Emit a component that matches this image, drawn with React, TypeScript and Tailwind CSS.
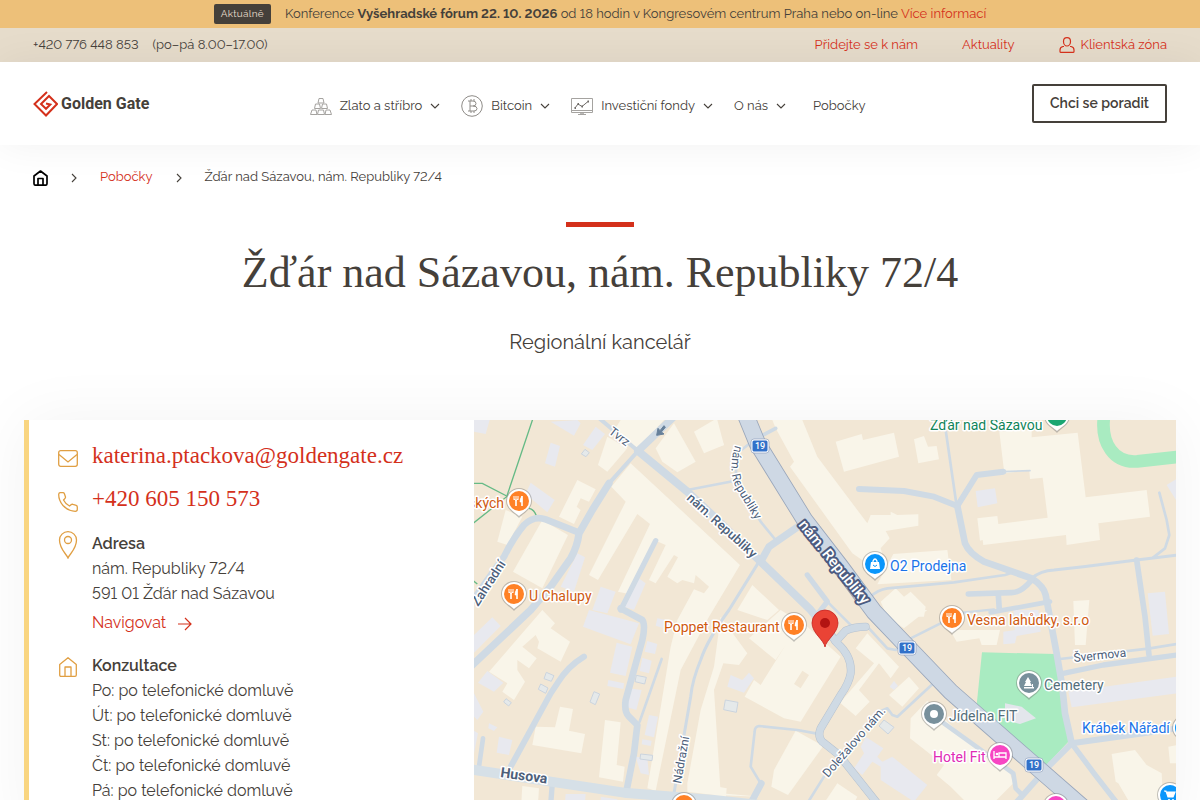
import { ReactNode } from 'react';

interface PinProps {
    x       : number;
    y       : number;
    color   : string;
    children?: ReactNode;
}

interface MapLabelProps {
    x       : number;
    y       : number;
    color   : string;
    anchor? : 'start' | 'end';
    children: ReactNode;
}

interface StreetProps {
    x       : number;
    y       : number;
    angle   : number;
    size?   : number;
    weight? : number;
    children: ReactNode;
}

// building outlines, roads and paths are kept in thirds of a pixel
const buildings = [
    '440,0 570,0 525,50 492,85 415,40',
    '400,50 460,85 400,155 372,135',
    '545,85 600,10 665,125 610,157 565,125',
    '660,35 720,0 750,75 690,100',
    '310,180 365,208 345,245 320,235 308,260 320,270 300,312 255,290',
    '205,300 282,345 205,505 117,455',
    '95,270 145,290 100,375 70,365',
    '470,130 412,200 455,245 345,465 372,480 490,282 528,312 432,515 465,522 540,360 575,375 525,480 545,490 600,405 612,412 580,470 610,490 625,480 660,490 665,465 705,500 690,520 660,508 610,600 590,680 520,1105 545,1112 620,750 705,590 798,435 720,362',
    '720,740 680,870 640,1090 640,1115 720,1125 860,1130 740,1120 720,810 748,730 795,735 820,700 740,590',
    '825,655 920,570 1000,620 1100,710 980,905 930,895 812,830 840,780 860,795 935,675 905,720',
    '965,932 1048,978 942,1125 892,1100 900,1050',
    '1145,685 1180,640 1275,740 1250,775 1215,730 1155,810 1187,845 1145,888 1098,848 1200,730',
    '1305,770 1335,805 1285,860 1245,825',
    '1205,570 1360,570 1290,625',
    '1310,895 1360,842 1440,925 1608,1060 1618,1090 1568,1140 1500,1170 1430,1100 1388,1065 1410,1035 1308,955',
    '1090,1090 1150,1130 1140,1150 1050,1150',
    '720,1098 758,1105 755,1140 720,1135',
    '905,25 895,0 985,0 1030,110 1180,310 1190,285 1250,285 1250,275 1270,285 1333,283 1333,317 1235,333 1247,355 1220,385 1230,420 1200,445 1135,400 948,140 960,125',
    '1085,65 1163,42 1167,60 1260,38 1275,110 1110,155',
    '1320,58 1350,48 1362,80 1388,78 1395,118 1333,130',
    '720,0 730,0 750,75 720,85',
    '1258,402 1420,390 1432,480 1210,493',
    '1220,545 1265,505 1290,530 1310,515 1355,560 1350,590 1240,590',
    '835,495 915,570 880,600 790,570',
    '1576,35 1673,30 1673,52 1811,38 1835,232 2018,210 2028,290 1873,310 1878,360 1778,375 1776,345 1528,375 1526,360 1518,362 1510,295 1570,288 1573,312 1721,293 1706,173 1668,177 1666,152 1591,160',
    '1798,543 1846,540 1835,675 1803,675',
    '1448,665 1428,630 1578,630 1568,675 1523,675 1516,655',
    '1913,1002 1983,990 2018,1035 2063,1060 2068,1150 1968,1150 1933,1090 1925,1085',
    '2083,980 2110,975 2110,1030 2088,1030',
    '205,570 243,610 230,625 288,665 260,725 190,685 195,665 185,645 145,680 188,715 165,745 130,720 130,750 153,785 120,840 85,815 100,790 45,755',
    '258,860 297,867 285,932 333,942 322,1000 175,975 185,920 243,922',
    '393,900 440,907 428,1035 452,1040 447,1085 375,1072',
    '145,1098 195,1105 190,1180 140,1180',
];

const annexes = [
    '0,0 47,0 35,42 0,35',
    '230,5 310,0 320,10 300,47',
    '365,20 393,42 355,90 327,75',
    '230,68 258,78 243,140 213,130',
    '170,188 242,240 220,277 155,222',
    '310,400 333,412 300,515 260,500',
    '380,500 425,515 400,580 355,570',
    '490,472 515,490 480,570 450,560',
    '55,592 80,618 0,698 0,645',
    '345,570 495,610 470,673 327,620',
    '428,668 475,680 455,768 408,758',
    '403,780 450,790 448,807 400,798',
    '520,663 550,672 543,702 512,695',
    '505,713 533,722 525,760 497,753',
    '465,805 503,810 487,870 460,862',
    '525,885 552,890 540,952 512,945',
    '550,595 575,600 570,625 545,617',
    '40,753 88,788 60,815 12,788',
    '75,950 115,960 105,1005 68,998',
    '0,820 28,875 10,900 0,890',
    '0,932 12,940 0,1000',
    '45,910 70,922 60,933 43,925',
    '275,1122 335,1122 330,1180 270,1180',
    '380,1130 430,1138 430,1180 380,1180',
    '505,958 533,962 530,978 503,973',
    '485,1010 520,1015 525,1065 500,1060',
    '770,765 805,780 825,758 840,775 810,818 760,800',
    '1175,950 1228,985 1210,1010 1225,1025 1255,1010 1360,1095 1320,1145 1220,1080 1220,1040 1195,1025 1165,1065 1140,1045 1170,1000 1160,980',
    '1260,783 1272,798 1260,810 1247,800',
    '1505,213 1563,205 1570,250 1511,262',
    '2078,195 2106,178 2106,240',
    '2021,520 2073,515 2085,642 2036,647',
    '1618,570 1693,570 1700,635 1628,648 1623,670 1588,673 1588,635 1623,630',
    '1783,815 2110,770 2110,820 1793,862',
];

const sheds = [
    '333,88 346,98 336,110 322,102',
    '217,757 240,767 232,784 210,776',
    '200,792 222,804 215,820 193,808',
    '96,836 112,848 104,858 89,846',
    '360,815 377,822 364,854 348,846',
    '487,766 517,772 512,792 483,785',
    '500,1002 536,1006 534,1022 498,1017',
    '754,840 792,847 787,877 749,869',
    '1230,900 1260,922 1242,942 1215,918',
];

const roads: [number, string][] = [
    [12, 'M370 -10 L492 93'],
    [24, 'M492 93 L640 215 L720 290 L860 425 L1010 570 L1080 655'],
    [22, 'M600 -10 L492 93'],
    [12, 'M492 93 L405 190'],
    [22, 'M405 190 L355 270 L315 340 Q310 380 290 415 L230 500 L170 570 L-10 740'],
    [20, 'M315 338 L215 298 Q180 285 150 315 Q120 350 90 410 L-10 550'],
    [8, 'M640 210 L780 183'],
    [16, 'M545 362 L440 570'],
    [20, 'M440 565 L505 600 Q515 615 505 660 L455 840 Q450 875 465 890 L490 915 L480 1000 L458 1110'],
    [8, 'M563 717 L497 905'],
    [18, 'M330 710 Q280 740 250 790 L230 820 L110 1040'],
    [14, 'M27 955 L15 1040'],
    [16, 'M235 1090 L228 1180'],
    [9, 'M855 425 L765 570 Q700 660 680 720 Q655 780 650 830 L600 1120'],
    [22, 'M975 318 L885 380 L860 425'],
    [8, 'M905 360 L860 305 L820 240 L785 170 L790 100 L840 60'],
    [11, 'M840 60 L905 25'],
    [16, 'M1000 465 L1060 545 L1025 590'],
    [8, 'M1060 545 L1135 620'],
    [18, 'M1155 207 L1290 213 L1380 230 L1450 258'],
    [18, 'M1450 258 L1508 165 L1588 155'],
    [5, 'M1588 155 L1668 152'],
    [8, 'M1415 30 L1448 258'],
    [20, 'M1450 258 L1473 370 Q1485 400 1530 425 L1673 475 Q1710 500 1715 525 L1748 700 L1765 800 L1773 880 L1793 970'],
    [16, 'M1793 970 L1860 1060 L1930 1150'],
    [18, 'M1793 970 L1718 1045 L1625 1150'],
    [18, 'M1793 970 L2008 940 L2110 925'],
    [9, 'M1673 475 Q1700 452 1740 450 L1828 440 L1988 420 L2110 405'],
    [17, 'M1988 420 L2013 590 L2025 705'],
    [8, 'M2038 412 L2073 385 L2086 345 L2078 300 L2056 218'],
    [17, 'M1673 480 Q1640 520 1610 518 L1483 522'],
    [17, 'M1573 525 L1576 570'],
    [14, 'M1550 577 L1728 545'],
    [8, 'M1190 530 Q1210 510 1240 505 L1440 487 L1593 465 L1613 458'],
    [16, 'M1768 760 L1888 735 L2110 705'],
    [8, 'M1758 717 L2028 685 L2110 672'],
    [7, 'M1428 582 L1560 568'],
    [8, 'M1185 625 L1240 685 L1265 690 L1310 655 L1440 590'],
    [8, 'M1025 940 L970 930 L855 918 Q842 920 842 935 L830 1040 L860 1090'],
    [20, 'M862 1090 L830 1150'],
    [8, 'M1375 793 L1270 890 L1255 885 L1240 865 L1205 880'],
    [8, 'M1050 1070 L1000 1150'],
    [14, 'M1410 910 L1618 1060 L1625 1105 L1645 1125'],
];

const edgedRoads: [number, string][] = [
    [21, 'M1035 600 L1090 670 Q1135 710 1130 760 Q1125 790 1100 825 L1040 925 Q1030 950 1045 965 L1095 1005 L1210 1150'],
    [21, 'M1085 665 L1115 632 Q1140 620 1175 620'],
];

function Pin({ x, y, color, children }: PinProps) {
    return (
        <g transform={`translate(${x} ${y})`}>
            <path d="M0 17 C-3 13 -13 9 -13 0 A13 13 0 0 1 13 0 C13 9 3 13 0 17Z" fill="#6b6b6b" opacity="0.4" />
            <path d="M0 15 C-3 12 -12 8 -12 0 A12 12 0 0 1 12 0 C12 8 3 12 0 15Z" fill="#fff" />
            <circle r="10" fill={color} />
            {children}
        </g>
    );
}

function Fork() {
    return (
        <g fill="none" stroke="#fff">
            <path d="M-5 -5V-1M-3 -5V-1M-1 -5V-1M-5 -2Q-3 1 -1 -2" strokeWidth="1" />
            <path d="M-3 -1V5M3 -5V5" strokeWidth="1.6" />
            <path d="M3 -5Q1 -3 1 1H3Z" fill="#fff" strokeWidth="0.6" />
        </g>
    );
}

function MapLabel({ x, y, color, anchor = 'start', children }: MapLabelProps) {
    return (
        <text x={x} y={y} fill={color} textAnchor={anchor} fontSize="14" stroke="#fff" strokeWidth="3" strokeLinejoin="round" paintOrder="stroke">
            {children}
        </text>
    );
}

function Street({ x, y, angle, size = 12, weight = 400, children }: StreetProps) {
    return (
        <text
            transform={`translate(${x} ${y}) rotate(${angle})`}
            fontSize={size}
            fontWeight={weight}
            fill="#4d607a"
            stroke="#fff"
            strokeWidth="3"
            strokeLinejoin="round"
            paintOrder="stroke"
        >
            {children}
        </text>
    );
}

function RoadSign({ x, y }: { x: number; y: number }) {
    return (
        <g transform={`translate(${x} ${y})`}>
            <rect x="-9" y="-7" width="18" height="14" rx="3" fill="#fff" stroke="#8496b5" strokeWidth="0.6" />
            <rect x="-7.5" y="-5.5" width="15" height="11" rx="1.5" fill="#3271c9" />
            <text y="3" fontSize="9" fontWeight="500" fill="#fff" textAnchor="middle">19</text>
        </g>
    );
}

function BranchMap() {
    return (
        <svg
            className="absolute inset-0 h-full w-full font-[Roboto,sans-serif]"
            viewBox="0 0 702 420"
            preserveAspectRatio="xMidYMin slice"
            role="img"
            aria-label="Mapa pobočky"
        >
            <rect width="702" height="420" fill="#f2e7d5" />
            <g transform="scale(0.33333)">
                {buildings.map((points) => <polygon key={points} points={points} fill="#f9f5e9" />)}
                <polygon points="985,752 1005,765 980,805 960,792" fill="#f2e7d5" />
                {annexes.map((points) => <polygon key={points} points={points} fill="#e8e9ef" />)}
                {sheds.map((points) => <polygon key={points} points={points} fill="#e5e9ea" stroke="#cbd4de" strokeWidth="3" />)}
                <polygon points="1524,697 1743,702 1783,965 1718,1035 1608,955 1508,855" fill="#a9ebc1" />
                <polygon points="1593,850 1643,860 1686,895 1638,912 1593,900" fill="#e3e6ec" />
                <path d="M1890 -10 C1880 70 1920 130 1990 124 L2110 111" fill="none" stroke="#a9ebc1" strokeWidth="38" />

                <g fill="none" stroke="#65ba86" strokeWidth="4">
                    <path d="M177 -5 L98 230 L-5 312" />
                    <path d="M-5 190 H25 L98 228" />
                    <path d="M165 265 Q180 268 187 287" />
                    <path d="M-5 480 L10 492" />
                </g>

                <g fill="none" stroke="#cfdae4" strokeLinecap="round" strokeLinejoin="round">
                    {roads.map(([width, d]) => <path key={d} d={d} strokeWidth={width} />)}
                </g>
                <g fill="none" strokeLinecap="round" strokeLinejoin="round">
                    {edgedRoads.map(([width, d]) => <path key={d} d={d} stroke="#b6c2d0" strokeWidth={width + 3} />)}
                    {edgedRoads.map(([width, d]) => <path key={d} d={d} stroke="#cfdae4" strokeWidth={width} />)}
                    <path d="M-10 1048 L230 1085 L450 1118 L720 1140 L900 1160" stroke="#d6e0e7" strokeWidth="30" />
                    <path d="M813 -20 L850 70 L992 300 L1100 440 L1200 575 L1310 690 L1430 815 L1681 1035 L1830 1165" stroke="#9aa7bb" strokeWidth="52" />
                    <path d="M813 -20 L850 70 L992 300 L1100 440 L1200 575 L1310 690 L1430 815 L1681 1035 L1830 1165" stroke="#ced8e4" strokeWidth="47" />
                </g>
                <path d="M548 46 L552 25 L558 32 L570 17 L574 22 L562 36 L570 42 Z" fill="#66809a" stroke="#66809a" strokeWidth="3" />
            </g>

            <Street x={134} y={13} angle={37}>Tvrz</Street>
            <Street x={212} y={79} angle={42} size={13} weight={500}>nám. Republiky</Street>
            <path id="side-street" d="M261 25 Q253 52 263 70 L285 106" fill="none" />
            <text fontSize="12" fill="#4d607a" stroke="#fff" strokeWidth="3" strokeLinejoin="round" paintOrder="stroke">
                <textPath href="#side-street">nám. Republiky</textPath>
            </text>
            <text
                transform="translate(324 105) rotate(51)"
                fontSize="15"
                fontWeight="500"
                fill="#fff"
                stroke="#4c5b80"
                strokeWidth="4"
                strokeLinejoin="round"
                paintOrder="stroke"
            >
                nám. Republiky
            </text>
            <Street x={4} y={187} angle={-57} size={13} weight={500}>Zahradní</Street>
            <Street x={26} y={357} angle={8} size={14} weight={700}>Husova</Street>
            <Street x={207} y={364} angle={-80}>Nádražní</Street>
            <Street x={354} y={358} angle={-49}>Doležalovo nám.</Street>
            <Street x={600} y={242} angle={-6} size={12}>Švermova</Street>

            <RoadSign x={286} y={26} />
            <RoadSign x={433} y={228} />
            <RoadSign x={560} y={345} />

            <MapLabel x={30} y={88} color="#cf5a10" anchor="end">ských</MapLabel>
            <MapLabel x={55} y={181} color="#cf5a10">U Chalupy</MapLabel>
            <MapLabel x={190} y={212} color="#cf5a10">Poppet Restaurant</MapLabel>
            <MapLabel x={493} y={205} color="#cf5a10">Vesna lahůdky, s.r.o</MapLabel>
            <MapLabel x={416} y={151} color="#1a73e8">O2 Prodejna</MapLabel>
            <MapLabel x={608} y={313} color="#1a73e8">Krábek Nářadí</MapLabel>
            <MapLabel x={456} y={10} color="#118459">Žďár nad Sázavou</MapLabel>
            <MapLabel x={570} y={270} color="#546e7a">Cemetery</MapLabel>
            <MapLabel x={475} y={301} color="#546e7a">Jídelna FIT</MapLabel>
            <MapLabel x={459} y={342} color="#e02cb5">Hotel Fit</MapLabel>

            <Pin x={45} y={81} color="#ff8126"><Fork /></Pin>
            <Pin x={40} y={174} color="#ff8126"><Fork /></Pin>
            <Pin x={320} y={205} color="#ff8126"><Fork /></Pin>
            <Pin x={478} y={198} color="#ff8126"><Fork /></Pin>
            <Pin x={210} y={385} color="#ff8126"><Fork /></Pin>
            <Pin x={583} y={-4} color="#1ba672" />
            <Pin x={582} y={386} color="#f746c3" />
            <Pin x={711} y={308} color="#0a96fb" />
            <Pin x={401} y={144} color="#0a96fb">
                <path d="M-4 -2H4L5 5H-5Z" fill="#fff" />
                <path d="M-2 -1V-3Q0 -7 2 -3V-1" fill="none" stroke="#fff" strokeWidth="1.3" />
                <path d="M-2 1Q0 4 2 1" fill="none" stroke="#0a96fb" />
            </Pin>
            <Pin x={696} y={375} color="#0a96fb">
                <path d="M-6 -4H-4L-2 2H3L5 -3H-3" fill="#fff" stroke="#fff" strokeWidth="1.2" />
                <circle cx="-1" cy="5" r="1.1" fill="#fff" />
                <circle cx="3" cy="5" r="1.1" fill="#fff" />
            </Pin>
            <Pin x={555} y={263} color="#78909c">
                <path d="M-1 -6L2 -1H1L3 3H-5L-3 -1H-4ZM-5 4H5V5.500H-5ZM3 1H4V4H3Z" fill="#fff" />
            </Pin>
            <Pin x={460} y={294} color="#78909c">
                <circle r="4" fill="#fff" />
            </Pin>
            <Pin x={526} y={335} color="#f746c3">
                <path d="M-6 -4V4M-6 2H6V-2H-1V2M6 2V4" fill="none" stroke="#fff" strokeWidth="1.3" />
                <circle cx="-3" cy="-1" r="1.3" fill="#fff" />
            </Pin>

            <path d="M351 227 C350 220 338 213 338 203 A13 13 0 0 1 364 203 C364 213 352 220 351 227Z" fill="#ea4335" stroke="#c5221f" strokeWidth="0.8" />
            <circle cx="351" cy="203" r="5" fill="#b31412" />
        </svg>
    );
}

function Chevron() {
    return (
        <svg className="ml-2 h-2 w-2.5" viewBox="0 0 10 8" fill="none" stroke="#45403a" strokeWidth="1.1" aria-hidden="true">
            <path d="M1 2L5 6L9 2" />
        </svg>
    );
}

function Crumb() {
    return (
        <svg className="mt-0.5 h-2.5 w-2" viewBox="0 0 8 10" fill="none" stroke="#45403a" strokeWidth="1.1" aria-hidden="true">
            <path d="M2 1L6 5L2 9" />
        </svg>
    );
}

function Logo() {
    return (
        <a href="#" className="flex items-center gap-[3px] font-[Roboto,sans-serif] text-base font-bold text-[#45403a]">
            <svg className="h-[26px] w-[25px]" viewBox="0 0 25 26" fill="none" stroke="#d4301b" strokeWidth="2" aria-hidden="true">
                <path d="M14 1L1.500 13L13 24.500L24 13L16 5L8 13L13 17.800L17.300 13.500L13 12.500" />
            </svg>
            <span className="whitespace-nowrap">Golden Gate</span>
        </a>
    );
}

function GoldIcon() {
    return (
        <svg className="h-6 w-[22px]" viewBox="0 0 22 24" fill="none" stroke="#a5a3a0" strokeWidth="1" aria-hidden="true">
            <path d="M8 9L9 4.500H13L14 9ZM4.500 14.500L5.500 10H9.500L10.500 14.500ZM11.500 14.500L12.500 10H16.500L17.500 14.500Z" />
            <path d="M0.500 20.500L2 16H6L7 20.500ZM7.500 20.500L8.500 16H13.500L14.500 20.500ZM15 20.500L16 16H20L21.500 20.500Z" />
        </svg>
    );
}

function BitcoinIcon() {
    return (
        <svg className="h-6 w-[22px]" viewBox="0 0 22 24" fill="none" stroke="#8f8c88" strokeWidth="1" aria-hidden="true">
            <circle cx="11" cy="12" r="10.300" />
            <path d="M7 7H12Q15 7 15 9.500Q15 12 12 12Q16 12 16 14.500Q16 17 13 17H7M9 7V17M9 12H12M10 5V7M13 5V7M10 17V19M13 17V19" />
        </svg>
    );
}

function FundsIcon() {
    return (
        <svg className="h-6 w-[22px]" viewBox="0 0 22 24" fill="none" stroke="#a5a3a0" strokeWidth="1" aria-hidden="true">
            <path d="M0.500 4.500H21.500V18.500H0.500ZM0.500 16.500H21.500M7 20.500H15M9 20Q11 18 13 20" />
            <path d="M4 14L7 10L11 12.500L17 7.500" stroke="#6e6a66" />
            <path d="M3.500 14H5M6.500 10H8M10.500 12.500H12M16.500 7.500H18" stroke="#6e6a66" strokeWidth="1.800" />
        </svg>
    );
}

const navItems = [
    { label: 'Zlato a stříbro', icon: <GoldIcon /> },
    { label: 'Bitcoin', icon: <BitcoinIcon /> },
    { label: 'Investiční fondy', icon: <FundsIcon /> },
];

const days = ['Po', 'Út', 'St', 'Čt', 'Pá'];

export default function App() {
    return (
        <div className="min-h-screen overflow-x-hidden bg-white font-[Raleway,Lato,sans-serif] lining-nums text-[#45403a]">
            <div className="flex h-7 items-center justify-center gap-3.5 bg-[#edc079] text-[13px]">
                <span className="rounded-xs bg-[#45403a] px-[7px] text-[10px] leading-5 tracking-wide text-[#e6dccb]">Aktuálně</span>
                <p>
                    Konference <strong>Vyšehradské fórum 22. 10. 2026</strong> od 18 hodin v Kongresovém centrum Praha nebo on-line{' '}
                    <a href="#" className="text-[#d4301b]">Více informací</a>
                </p>
            </div>

            <div className="flex h-[34px] items-center justify-between bg-[#e6dccb] px-[33px] text-[13px]">
                <div className="flex gap-3.5">
                    <a href="tel:+420776448853">+420 776 448 853</a>
                    <span>(po–pá 8.00–17.00)</span>
                </div>
                <div className="flex items-center gap-11 text-[#d4301b]">
                    <a href="#">Přidejte se k nám</a>
                    <a href="#">Aktuality</a>
                    <a href="#" className="flex items-center gap-1.5">
                        <svg className="h-4 w-4" viewBox="0 0 16 16" fill="none" stroke="currentColor" strokeWidth="1.2" aria-hidden="true">
                            <path d="M8 0.700C10.500 0.700 11.500 2.500 11.500 4.500C11.500 7 10 9 8 9C6 9 4.500 7 4.500 4.500C4.500 2.500 5.500 0.700 8 0.700Z" />
                            <path d="M5 9.500H4Q1 10 1 13V14.500Q1 15.400 2 15.400H14Q15 15.400 15 14.500V13Q15 10 12 9.500H11" />
                        </svg>
                        Klientská zóna
                    </a>
                </div>
            </div>

            <header className="flex h-[83px] items-center justify-between bg-white px-[33px] shadow-[0_0_40px_rgba(0,0,0,0.06)]">
                <Logo />
                <nav className="mr-1.5 flex items-center pt-1 text-[13px]">
                    {navItems.map((item) => (
                        <a key={item.label} href="#" className="mr-[21px] flex items-center whitespace-nowrap">
                            {item.icon}
                            <span className="ml-2">{item.label}</span>
                            <Chevron />
                        </a>
                    ))}
                    <a href="#" className="mr-[27px] flex items-center whitespace-nowrap">O nás<Chevron /></a>
                    <a href="#">Pobočky</a>
                </nav>
                <button type="button" className="h-[39px] w-[135px] rounded-xs border-2 border-[#45403a] pb-0.5 text-sm font-semibold whitespace-nowrap">
                    Chci se poradit
                </button>
            </header>

            <nav className="flex h-16 items-center px-[33px] text-[13px]" aria-label="Drobečková navigace">
                <a href="#" aria-label="Domů">
                    <svg className="mt-0.5 h-4 w-[15px]" viewBox="0 0 15 16" fill="none" stroke="#000" strokeWidth="1.700" strokeLinejoin="round" aria-hidden="true">
                        <path d="M1 6L7.500 1L14 6V13.500Q14 15.200 12.500 15.200H2.500Q1 15.200 1 13.500ZM5 15V8.500H10V15" />
                    </svg>
                </a>
                <span className="mx-[22px]"><Crumb /></span>
                <a href="#" className="text-[#d4301b]">Pobočky</a>
                <span className="mx-[22px]"><Crumb /></span>
                <span>Žďár nad Sázavou, nám. Republiky 72/4</span>
            </nav>

            <main>
                <div className="flex flex-col items-center pt-[13px] text-center">
                    <div className="h-[5px] w-[68px] bg-[#d4301b]" />
                    <h1 className="mt-5 font-['Liberation_Serif',serif] text-[44px] leading-[52px]">
                        Žďár nad Sázavou, nám. Republiky 72/4
                    </h1>
                    <p className="mt-[27px] text-xl leading-8">Regionální kancelář</p>
                </div>

                <section className="mx-6 mt-[62px] grid grid-cols-[450px_1fr] bg-white shadow-[0_0_60px_rgba(0,0,0,0.05)]">
                    <div className="grid grid-cols-[20px_1fr] content-start gap-x-3.5 border-l-5 border-[#f9d580] pt-5 pb-8 pl-[29px] text-base leading-[25px]">
                        <svg className="mt-2.5 h-[17px] w-5" viewBox="0 0 20 17" fill="none" stroke="#e09f43" strokeWidth="1.300" aria-hidden="true">
                            <rect x="0.700" y="0.700" width="18.600" height="15.600" rx="2" />
                            <path d="M1 4.500L10 12L19 4.500" />
                        </svg>
                        <a href="mailto:katerina.ptackova@goldengate.cz" className="font-['Liberation_Serif',serif] text-[23px] leading-8 text-[#d4301b]">
                            katerina.ptackova@goldengate.cz
                        </a>

                        <svg className="mt-5 h-5 w-5" viewBox="0 0 20 20" fill="none" stroke="#e09f43" strokeWidth="1.300" strokeLinejoin="round" aria-hidden="true">
                            <path d="M2 0.700H5Q6 0.700 6.400 1.700L7.500 5Q7.700 6 6.500 7L5.500 8Q7.500 12 11.500 14L13 12.700Q14 12 15 12.400L18.200 13.300Q19.300 13.700 19.300 15V17.500Q19.300 19.300 17.300 19.300Q10 19 5 13.500Q0.700 8.500 0.700 2.500Q0.700 1 2 0.700Z" />
                        </svg>
                        <a href="tel:+420605150573" className="mt-[11px] font-['Liberation_Serif',serif] text-[23px] leading-8 text-[#d4301b]">
                            +420 605 150 573
                        </a>

                        <svg className="mt-4 h-7 w-5" viewBox="0 0 20 28" fill="none" stroke="#e09f43" strokeWidth="1.300" aria-hidden="true">
                            <path d="M10 27C8.500 23 1.500 18 1.500 9A8.500 8.300 0 0 1 18.500 9C18.500 18 11.500 23 10 27Z" />
                            <circle cx="10" cy="9" r="3.500" />
                        </svg>
                        <div className="mt-4">
                            <h2 className="font-semibold">Adresa</h2>
                            <p>nám. Republiky 72/4<br />591 01 Žďár nad Sázavou</p>
                            <a href="#" className="mt-1 flex items-center gap-3 text-[#d4301b]">
                                Navigovat
                                <svg className="mt-0.5 h-3.5 w-3.5" viewBox="0 0 14 14" fill="none" stroke="currentColor" strokeWidth="1.200" aria-hidden="true">
                                    <path d="M0 7H13M7 1L13 7L7 13" />
                                </svg>
                            </a>
                        </div>

                        <svg className="mt-[22px] h-5 w-5" viewBox="0 0 20 20" fill="none" stroke="#e09f43" strokeWidth="1.300" strokeLinejoin="round" aria-hidden="true">
                            <path d="M1.700 7.500L10 0.700L18.300 7.500V18Q18.300 19.300 17 19.300H3Q1.700 19.300 1.700 18ZM7 19V10H13V19" />
                        </svg>
                        <div className="mt-[18px]">
                            <h2 className="font-semibold">Konzultace</h2>
                            {days.map((day) => <p key={day}>{day}: po telefonické domluvě</p>)}
                        </div>
                    </div>
                    <div className="relative overflow-hidden">
                        <BranchMap />
                    </div>
                </section>
            </main>
        </div>
    );
}
